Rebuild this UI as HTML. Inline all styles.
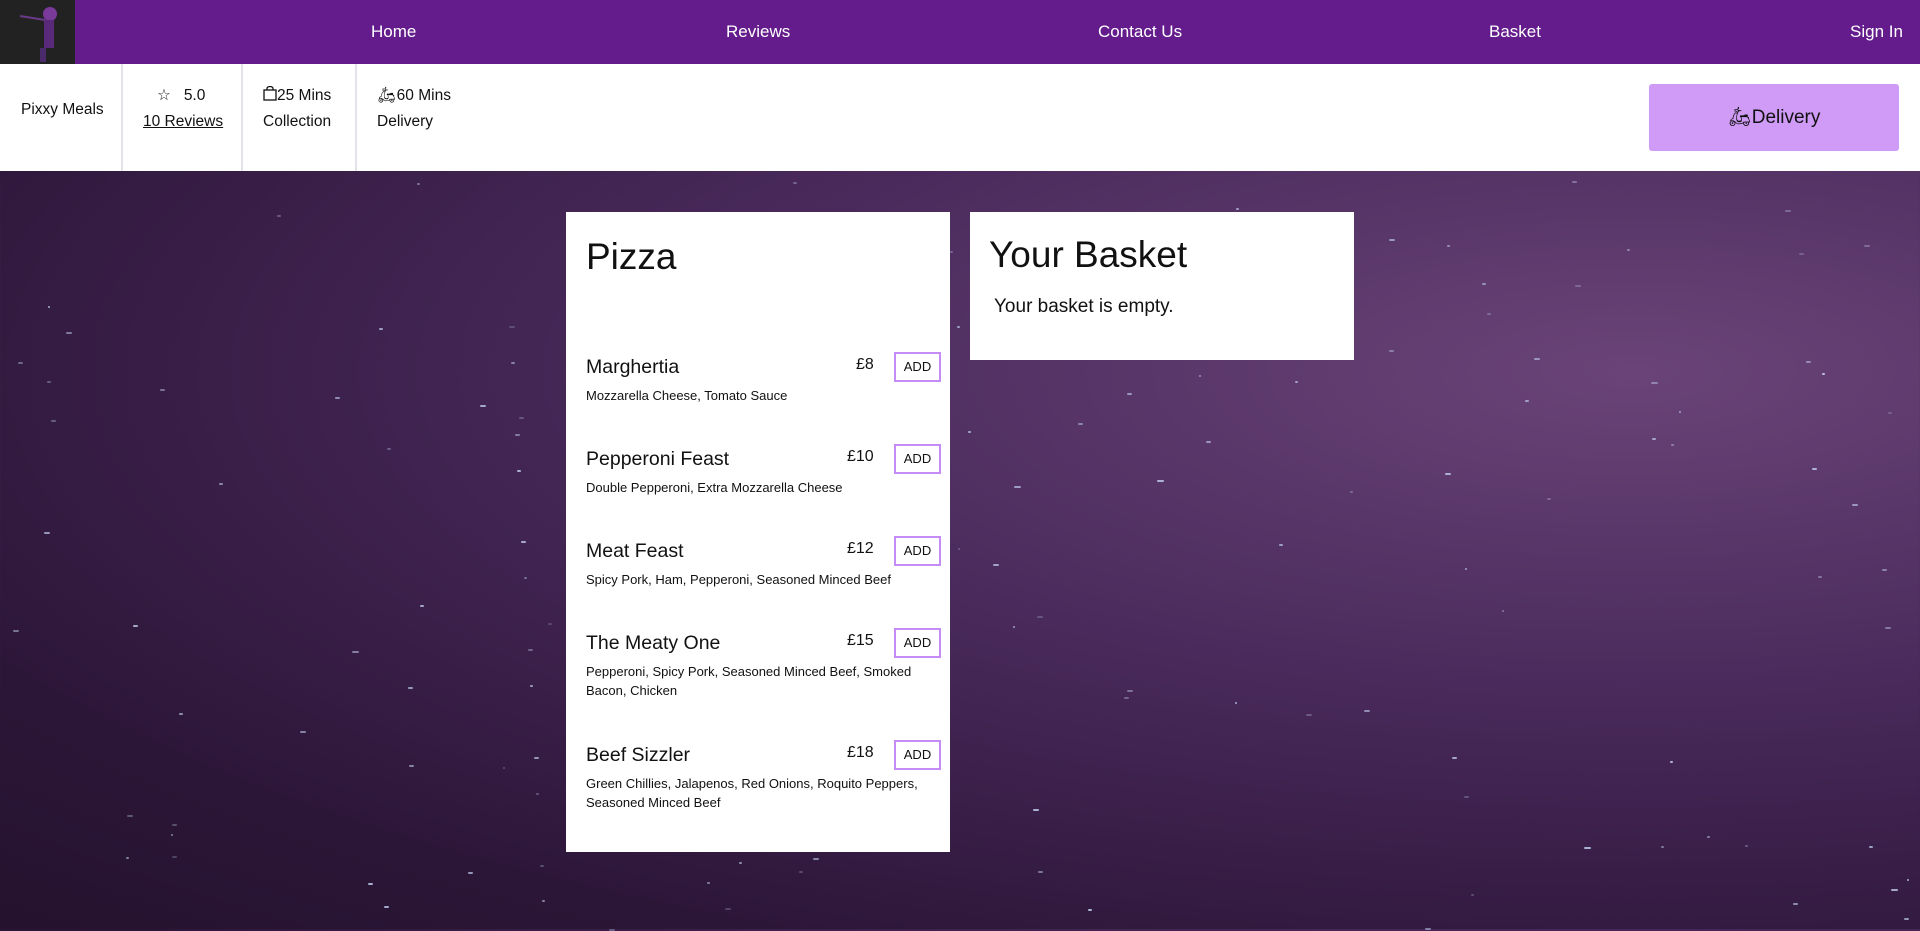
<!DOCTYPE html>
<html><head><meta charset="utf-8"><style>
*{margin:0;padding:0;box-sizing:border-box}
body{width:1920px;height:929px;overflow:hidden;font-family:"Liberation Sans",sans-serif;color:#111;position:relative;
background:radial-gradient(ellipse at 85% 40%,#6a4478 0%,#4a2a5c 40%,#2c1638 80%,#24122e 100%);}
.nav{position:absolute;top:0;left:0;width:1920px;height:64px;background:#641c8c;color:#fff;font-size:17px}
.nav span{position:absolute;top:22px}
.logo{position:absolute;left:0;top:0;width:75px;height:64px;background:#222}
.info{position:absolute;top:64px;left:0;width:1920px;height:107px;background:#fff;font-size:15.5px}
.info .t{position:absolute}
.div{position:absolute;top:0;width:2px;height:107px;background:#e4e4e8}
.btn{position:absolute;left:1649px;top:20px;width:250px;height:67px;background:#d09bf7;border-radius:3px;font-size:19px;text-align:center;line-height:67px}
.card{position:absolute;background:#fff}
.item{position:absolute;left:20px;width:360px}
.item .n{font-size:19.5px;position:absolute;top:0;left:0}
.item .d{font-size:13px;position:absolute;top:30px;left:0;width:345px;line-height:19px}
.item .p{font-size:16px;position:absolute;top:0px}
.item .a{position:absolute;left:308px;top:-4px;width:47px;height:30px;border:2px solid #c58cf5;font-size:13px;text-align:center;line-height:26px}
.star{position:absolute;width:2px;height:2px;background:#cfe0ff;border-radius:1px}
</style></head><body>
<div id="stars"></div>
<div class="nav">
<div class="logo"><svg width="75" height="64"><circle cx="50" cy="14" r="7" fill="#7a3a9a"/><rect x="44" y="20" width="10" height="28" fill="#5a2a7a"/><line x1="20" y1="16" x2="45" y2="20" stroke="#6a3a8a" stroke-width="2"/><rect x="40" y="48" width="6" height="14" fill="#4a2a6a"/></svg></div>
<span style="left:371px">Home</span>
<span style="left:726px">Reviews</span>
<span style="left:1098px">Contact Us</span>
<span style="left:1489px">Basket</span>
<span style="left:1850px">Sign In</span>
</div>
<div class="info">
<div class="t" style="left:21px;top:37px">Pixxy Meals</div>
<div class="div" style="left:121px"></div>
<div class="t" style="left:157px;top:22px">☆ &nbsp; 5.0</div>
<div class="t" style="left:143px;top:49px;text-decoration:underline">10 Reviews</div>
<div class="div" style="left:241px"></div>
<div class="t" style="left:263px;top:22px"><svg width="14" height="15" style="vertical-align:-1px"><rect x="1" y="4" width="12" height="10" fill="none" stroke="#111" stroke-width="1.3"/><path d="M4 4V2.5A3 2 0 0 1 10 2.5V4" fill="none" stroke="#111" stroke-width="1.3"/></svg>25 Mins</div>
<div class="t" style="left:263px;top:49px">Collection</div>
<div class="div" style="left:355px"></div>
<div class="t" style="left:377px;top:22px">🛵︎60 Mins</div>
<div class="t" style="left:377px;top:49px">Delivery</div>
<div class="btn">🛵︎Delivery</div>
</div>
<div class="card" style="left:566px;top:212px;width:384px;height:640px">
<div style="position:absolute;left:20px;top:24px;font-size:37px">Pizza</div>
<div class="item" style="top:144px"><div class="n">Marghertia</div><div class="d">Mozzarella Cheese, Tomato Sauce</div><div class="p" style="left:270px">£8</div><div class="a">ADD</div></div>
<div class="item" style="top:236px"><div class="n">Pepperoni Feast</div><div class="d">Double Pepperoni, Extra Mozzarella Cheese</div><div class="p" style="left:261px">£10</div><div class="a">ADD</div></div>
<div class="item" style="top:328px"><div class="n">Meat Feast</div><div class="d">Spicy Pork, Ham, Pepperoni, Seasoned Minced Beef</div><div class="p" style="left:261px">£12</div><div class="a">ADD</div></div>
<div class="item" style="top:420px"><div class="n">The Meaty One</div><div class="d">Pepperoni, Spicy Pork, Seasoned Minced Beef, Smoked Bacon, Chicken</div><div class="p" style="left:261px">£15</div><div class="a">ADD</div></div>
<div class="item" style="top:532px"><div class="n">Beef Sizzler</div><div class="d">Green Chillies, Jalapenos, Red Onions, Roquito Peppers, Seasoned Minced Beef</div><div class="p" style="left:261px">£18</div><div class="a">ADD</div></div>
</div>
<div class="card" style="left:970px;top:212px;width:384px;height:148px">
<div style="position:absolute;left:19px;top:22px;font-size:37px">Your Basket</div>
<div style="position:absolute;left:24px;top:84px;font-size:19px">Your basket is empty.</div>
</div>
<script>
var s='',x=12345;function r(){x=(x*9301+49297)%233280;return x/233280}
for(var i=0;i<150;i++){var L=r()*1920,T=171+r()*758,w=2+r()*5;s+='<div class="star" style="left:'+L.toFixed(0)+'px;top:'+T.toFixed(0)+'px;width:'+w.toFixed(0)+'px;opacity:'+(0.2+r()*0.6).toFixed(2)+'"></div>'}
document.getElementById('stars').innerHTML=s;
</script>
</body></html>
